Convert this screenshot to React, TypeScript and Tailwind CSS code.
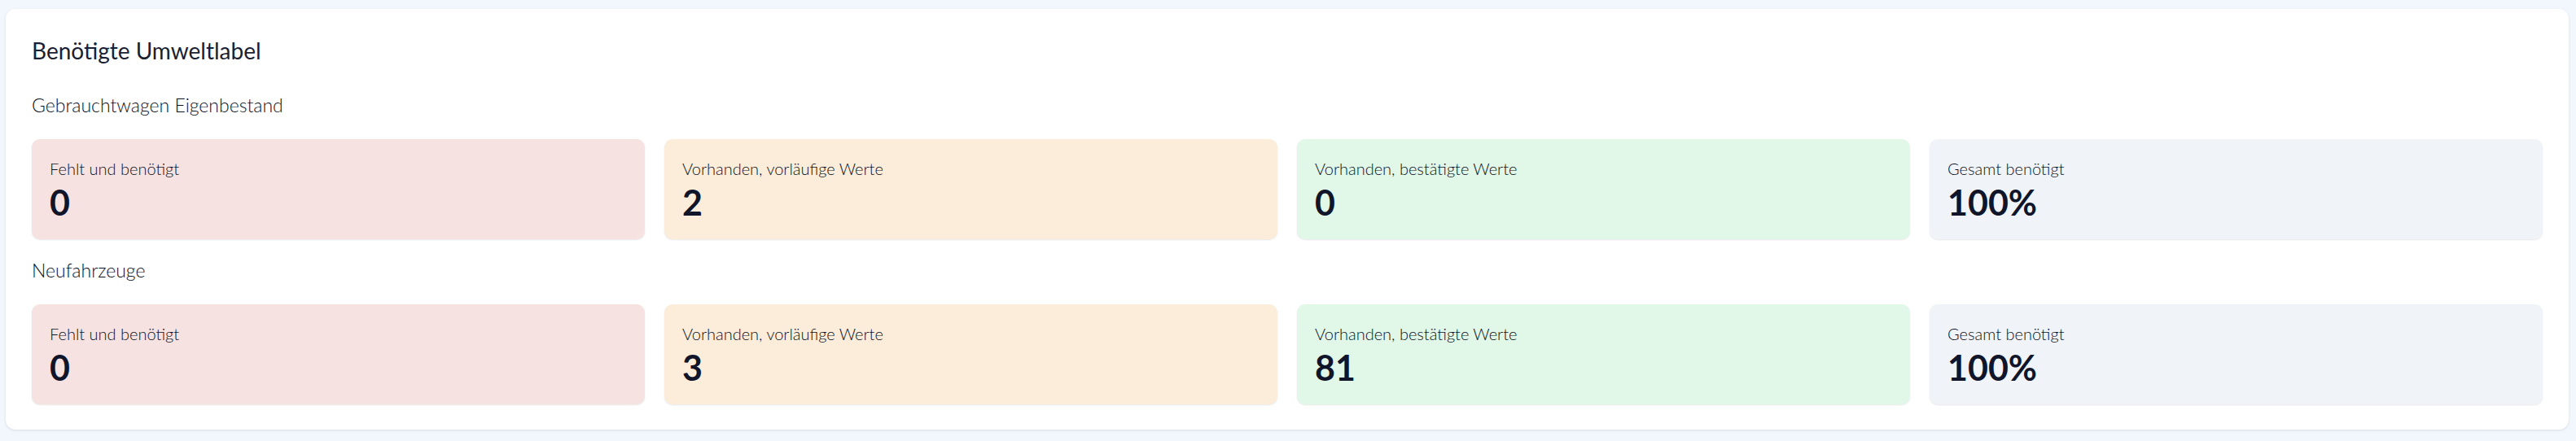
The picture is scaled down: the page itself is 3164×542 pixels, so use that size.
import React from "react";

type Stat = { label: string; value: string; bg: string };

const rowA: Stat[] = [
  { label: "Fehlt und benötigt", value: "0", bg: "bg-[#f7e2e2]" },
  { label: "Vorhanden, vorläufige Werte", value: "2", bg: "bg-[#fcedda]" },
  { label: "Vorhanden, bestätigte Werte", value: "0", bg: "bg-[#e1f8e9]" },
  { label: "Gesamt benötigt", value: "100%", bg: "bg-[#f0f4f9]" },
];

const rowB: Stat[] = [
  { label: "Fehlt und benötigt", value: "0", bg: "bg-[#f7e2e2]" },
  { label: "Vorhanden, vorläufige Werte", value: "3", bg: "bg-[#fcedda]" },
  { label: "Vorhanden, bestätigte Werte", value: "81", bg: "bg-[#e1f8e9]" },
  { label: "Gesamt benötigt", value: "100%", bg: "bg-[#f0f4f9]" },
];

function StatCard({ s }: { s: Stat }) {
  return (
    <div
      className={`${s.bg} rounded-[10px] px-[22px] pt-[22px] pb-[22px] shadow-[0_1px_2px_rgba(15,23,42,0.10)]`}
    >
      <div className="text-[20px] leading-[28px] font-light text-[#0e1326]">{s.label}</div>
      <div className="mt-[4px] text-[43px] leading-[47px] font-bold text-[#10152a]">{s.value}</div>
    </div>
  );
}

function Section({ title, stats, className }: { title: string; stats: Stat[]; className: string }) {
  return (
    <section className={className}>
      <h3 className="text-[23px] leading-[28px] font-light text-[#0e1326]">{title}</h3>
      <div className="mt-[28px] grid grid-cols-4 gap-[24px]">
        {stats.map((s, i) => (
          <StatCard key={i} s={s} />
        ))}
      </div>
    </section>
  );
}

export default function App() {
  return (
    <div
      className="min-h-screen bg-[#f2f7fd] pt-[11px] pl-[7px] pr-[9px] pb-[14px]"
      style={{ fontFamily: "Lato, 'Liberation Sans', sans-serif" }}
    >
      <div className="bg-white rounded-[12px] shadow-[0_1px_3px_rgba(15,23,42,0.12)] px-[32px] pt-[33px] pb-[31px]">
        <h2 className="text-[28px] leading-[36px] font-normal text-[#1a1f33]">Benötigte Umweltlabel</h2>
        <Section title="Gebrauchtwagen Eigenbestand" stats={rowA} className="mt-[35px]" />
        <Section title="Neufahrzeuge" stats={rowB} className="mt-[24px]" />
      </div>
    </div>
  );
}
